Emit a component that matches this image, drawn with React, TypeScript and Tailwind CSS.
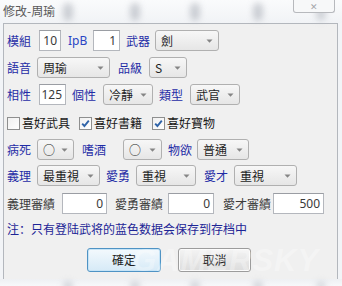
import React from "react";

function Label({ children, cls = "" }: { children: React.ReactNode; cls?: string }) {
  return (
    <span className={`text-[12px] leading-[14px] text-[#1f2ca6] whitespace-nowrap shrink-0 ${cls}`}>
      {children}
    </span>
  );
}

function Input({ value, cls }: { value: string; cls: string }) {
  return (
    <div
      className={`h-[21px] shrink-0 bg-white border border-[#b4b7bd] border-t-[#9a9da3] flex items-center justify-end pr-[3px] text-[12px] text-[#3a3a3a] font-['Noto_Sans',sans-serif] ${cls}`}
    >
      {value}
    </div>
  );
}

function Combo({ text, cls }: { text: string; cls: string }) {
  return (
    <div
      className={`h-[21px] shrink-0 flex items-center justify-between rounded-[3px] border border-[#b0b0b0] bg-gradient-to-b from-[#f7f7f7] to-[#e6e6e6] pl-[5px] pr-[5px] text-[12px] text-[#1e1e1e] ${cls}`}
    >
      <span className="whitespace-nowrap leading-[14px]">{text}</span>
      <svg width="7" height="4" viewBox="0 0 7 4" className="shrink-0">
        <path d="M0.5 0.5h6L3.5 3.7z" fill="#858585" />
      </svg>
    </div>
  );
}

function Check({ checked, cls = "" }: { checked: boolean; cls?: string }) {
  return (
    <div
      className={`w-[13px] h-[13px] shrink-0 border border-[#8e8f8f] bg-gradient-to-br from-[#f0f0f0] to-white flex items-center justify-center ${cls}`}
    >
      {checked && (
        <svg width="9" height="9" viewBox="0 0 9 9">
          <path d="M1.2 4.6 L3.4 7 L7.8 1.6" stroke="#2f63a8" strokeWidth="1.9" fill="none" />
        </svg>
      )}
    </div>
  );
}

export default function App() {
  return (
    <div className="w-[342px] h-[286px] relative overflow-hidden bg-[#f2f4f7] flex flex-col font-['Noto_Sans_CJK_TC','Noto_Sans_CJK_SC',sans-serif]">
      {/* title bar */}
      <div className="h-[23px] shrink-0 relative bg-gradient-to-b from-[#fafbfc] to-[#f1f3f6]">
        <div className="absolute left-[63px] top-[3px] w-[10px] h-[18px] rounded-full bg-[#b9bdc4] blur-[3px] opacity-70" />
        <div className="absolute left-[130px] top-[3px] w-[10px] h-[18px] rounded-full bg-[#b9bdc4] blur-[3px] opacity-70" />
        <div className="absolute left-[190px] top-[3px] w-[10px] h-[18px] rounded-full bg-[#b9bdc4] blur-[3px] opacity-70" />
        <div className="absolute left-[253px] top-[3px] w-[10px] h-[18px] rounded-full bg-[#b9bdc4] blur-[3px] opacity-70" />
        <div className="absolute left-[316px] top-[3px] w-[10px] h-[18px] rounded-full bg-[#b9bdc4] blur-[3px] opacity-60" />
        <span className="absolute left-[3px] top-[4px] text-[12px] leading-[14px] text-[#5a5a5a]">修改-周瑜</span>
        <div className="absolute left-[293px] top-0 w-[42px] h-[13px] border border-t-0 border-[#b7b9bd] rounded-b-[3px] bg-[#f7f8f9] flex items-center justify-center">
          <span className="text-[9px] leading-[9px] text-[#a4a6aa]">✕</span>
        </div>
      </div>

      {/* client */}
      <div className="ml-[3px] w-[335px] h-[256px] shrink-0 bg-[#f0f0f0] border border-b-0 border-[#b3b7bd] flex flex-col pl-[3px]">
        {/* row 1 */}
        <div className="mt-[6px] h-[21px] flex items-center">
          <Label cls="w-[24px]">模組</Label>
          <Input value="10" cls="ml-[8px] w-[22px]" />
          <Label cls="ml-[7px] w-[20px] font-['Noto_Sans',sans-serif] text-[11px] text-[#2a45c4]">IpB</Label>
          <Input value="1" cls="ml-[5px] w-[27px]" />
          <Label cls="ml-[6px] w-[24px]">武器</Label>
          <Combo text="劍" cls="ml-[5px] w-[64px]" />
        </div>
        {/* row 2 */}
        <div className="mt-[6px] h-[21px] flex items-center">
          <Label cls="w-[24px]">語音</Label>
          <Combo text="周瑜" cls="ml-[6px] w-[73px]" />
          <Label cls="ml-[8px] w-[24px]">品級</Label>
          <Combo text="S" cls="ml-[7px] w-[38px]" />
        </div>
        {/* row 3 */}
        <div className="mt-[6px] h-[21px] flex items-center">
          <Label cls="w-[24px]">相性</Label>
          <Input value="125" cls="ml-[8px] w-[27px]" />
          <Label cls="ml-[6px] w-[24px]">個性</Label>
          <Combo text="冷靜" cls="ml-[7px] w-[50px]" />
          <Label cls="ml-[6px] w-[24px]">類型</Label>
          <Combo text="武官" cls="ml-[7px] w-[50px]" />
        </div>
        {/* row 4 */}
        <div className="mt-[10px] h-[16px] flex items-center">
          <Check checked={false} />
          <span className="ml-[2px] w-[48px] text-[12px] leading-[14px] text-[#1a1a1a] whitespace-nowrap">喜好武具</span>
          <Check checked cls="ml-[9px]" />
          <span className="ml-[2px] w-[48px] text-[12px] leading-[14px] text-[#1a1a1a] whitespace-nowrap">喜好書籍</span>
          <Check checked cls="ml-[10px]" />
          <span className="ml-[2px] w-[48px] text-[12px] leading-[14px] text-[#1a1a1a] whitespace-nowrap">喜好寶物</span>
        </div>
        {/* row 5 */}
        <div className="mt-[8px] h-[21px] flex items-center">
          <Label cls="w-[24px]">病死</Label>
          <Combo text="○" cls="ml-[6px] w-[37px]" />
          <Label cls="ml-[8px] w-[24px]">嗜酒</Label>
          <Combo text="○" cls="ml-[17px] w-[39px]" />
          <Label cls="ml-[6px] w-[24px]">物欲</Label>
          <Combo text="普通" cls="ml-[5px] w-[52px]" />
        </div>
        {/* row 6 */}
        <div className="mt-[5px] h-[21px] flex items-center">
          <Label cls="w-[24px]">義理</Label>
          <Combo text="最重視" cls="ml-[6px] w-[63px]" />
          <Label cls="ml-[6px] w-[24px]">愛勇</Label>
          <Combo text="重視" cls="ml-[6px] w-[60px]" />
          <Label cls="ml-[8px] w-[24px]">愛才</Label>
          <Combo text="重視" cls="ml-[6px] w-[63px]" />
        </div>
        {/* row 7 */}
        <div className="mt-[7px] h-[21px] flex items-center">
          <span className="w-[48px] shrink-0 text-[12px] leading-[14px] text-[#3c3c3c] whitespace-nowrap">義理審績</span>
          <Input value="0" cls="ml-[7px] w-[45px]" />
          <span className="ml-[8px] w-[48px] shrink-0 text-[12px] leading-[14px] text-[#3c3c3c] whitespace-nowrap">愛勇審績</span>
          <Input value="0" cls="ml-[5px] w-[46px]" />
          <span className="ml-[9px] w-[48px] shrink-0 text-[12px] leading-[14px] text-[#3c3c3c] whitespace-nowrap">愛才審績</span>
          <Input value="500" cls="ml-[2px] w-[51px]" />
        </div>
        {/* note */}
        <div className="mt-[7px] h-[16px] flex items-center">
          <span className="text-[12px] leading-[14px] text-[#1d2596] whitespace-nowrap font-['Noto_Sans_CJK_SC',sans-serif]">
            注：只有登陆武将的蓝色数据会保存到存档中
          </span>
        </div>
        {/* buttons */}
        <div className="mt-[11px] h-[24px] flex items-center pl-[80px]">
          <button className="w-[74px] h-[24px] rounded-[3px] border border-[#4f93c4] bg-gradient-to-b from-[#f3f9fd] to-[#d6eaf7] text-[12px] text-[#1e1e1e] shadow-[inset_0_0_0_1px_#c6e4f7]">
            確定
          </button>
          <button className="ml-[17px] w-[73px] h-[24px] rounded-[3px] border border-[#9c9c9c] bg-gradient-to-b from-[#f4f4f4] to-[#dcdcdc] text-[12px] text-[#1e1e1e] shadow-[inset_0_0_0_1px_#fbfbfb]">
            取消
          </button>
        </div>
      </div>

      {/* bottom frame */}
      <div className="flex-1 relative bg-gradient-to-b from-[#eef0f3] to-[#f7f8fa]">
        <div className="absolute left-[63px] top-[2px] w-[10px] h-[10px] rounded-full bg-[#b9bdc4] blur-[3px] opacity-60" />
        <div className="absolute left-[130px] top-[2px] w-[10px] h-[10px] rounded-full bg-[#b9bdc4] blur-[3px] opacity-60" />
        <div className="absolute left-[190px] top-[2px] w-[10px] h-[10px] rounded-full bg-[#b9bdc4] blur-[3px] opacity-60" />
        <div className="absolute left-[253px] top-[2px] w-[10px] h-[10px] rounded-full bg-[#b9bdc4] blur-[3px] opacity-60" />
        <div className="absolute left-[316px] top-[2px] w-[10px] h-[10px] rounded-full bg-[#b9bdc4] blur-[3px] opacity-50" />
      </div>

      {/* watermark */}
      <div className="absolute left-[132px] top-[244px] pointer-events-none text-[31px] leading-[34px] font-bold italic tracking-[1px] text-white/30 font-['Liberation_Sans',sans-serif]">
        GAMERSKY
      </div>
    </div>
  );
}
